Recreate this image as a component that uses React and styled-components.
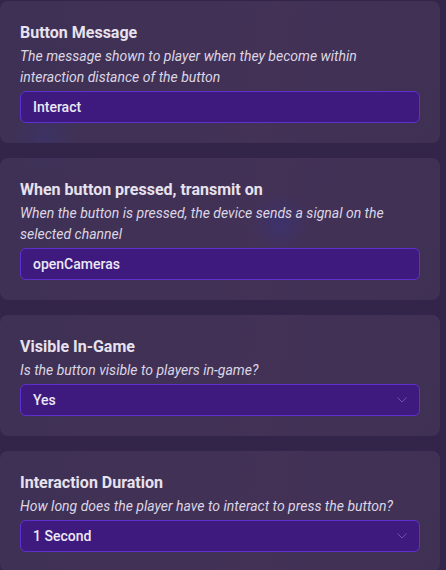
import React from 'react';
import styled, { createGlobalStyle } from 'styled-components';

const GlobalStyle = createGlobalStyle`
  html, body {
    margin: 0;
    padding: 0;
    background: #33244a;
  }

  body {
    font-family: Roboto, "Noto Sans", sans-serif;
    -webkit-font-smoothing: antialiased;
  }
`;

const Page = styled('div')`
  display: flex;
  flex-direction: column;
  gap: 15px;
  width: 440px;
  padding-top: 1px;
  min-height: 570px;
  box-sizing: border-box;
`;

const glows = {
  first: 'radial-gradient(circle at 45px 135px, rgba(58, 52, 112, 0.55) 0, rgba(58, 52, 112, 0) 32px),',
  second:
    'radial-gradient(circle at 45px -20px, rgba(58, 52, 112, 0.45) 0, rgba(58, 52, 112, 0) 34px),' +
    'radial-gradient(circle at 280px 65px, rgba(56, 50, 122, 0.6) 0, rgba(56, 50, 122, 0) 30px),',
};

const Card = styled('section')`
  display: flex;
  flex-direction: column;
  padding: 20px;
  border-radius: 8px;
  background: ${(p) => glows[p.$glow] || ''} linear-gradient(100deg, #3e3155 0%, #433156 60%, #3f3154 100%);
`;

const Title = styled('div')`
  margin-top: 1px;
  font-size: 16px;
  line-height: 22px;
  font-weight: 700;
  color: #e7e2ee;
`;

const Description = styled('div')`
  margin-top: 2px;
  font-size: 14px;
  line-height: 21px;
  font-style: italic;
  color: #dcd6e4;
`;

const Field = styled('div')`
  display: flex;
  align-items: center;
  justify-content: space-between;
  margin-top: 3px;
  height: 32px;
  box-sizing: border-box;
  padding: 0 11px 0 12px;
  border: 1px solid #5e31cf;
  border-radius: 6px;
  background: #3e1a7f;
  color: #ece8f4;
  font-size: 14px;
  font-weight: 500;
`;

const Chevron = styled('svg')`
  width: 12px;
  height: 8px;
  color: #6d4fb4;
`;

function ChevronDown() {
  return (
    <Chevron viewBox="0 0 12 8" fill="none">
      <path d="M1.5 1.5 L6 6 L10.5 1.5" stroke="currentColor" strokeWidth="1" />
    </Chevron>
  );
}

const settings = [
  {
    title: 'Button Message',
    text: 'The message shown to player when they become within interaction distance of the button',
    value: 'Interact',
    glow: 'first',
  },
  {
    title: 'When button pressed, transmit on',
    text: 'When the button is pressed, the device sends a signal on the selected channel',
    value: 'openCameras',
    glow: 'second',
  },
  {
    title: 'Visible In-Game',
    text: 'Is the button visible to players in-game?',
    value: 'Yes',
    select: true,
  },
  {
    title: 'Interaction Duration',
    text: 'How long does the player have to interact to press the button?',
    value: '1 Second',
    select: true,
  },
];

export default function App() {
  return (
    <>
      <GlobalStyle />
      <Page>
        {settings.map((item) => (
          <Card key={item.title} $glow={item.glow}>
            <Title>{item.title}</Title>
            <Description>{item.text}</Description>
            <Field>
              <span>{item.value}</span>
              {item.select && <ChevronDown />}
            </Field>
          </Card>
        ))}
      </Page>
    </>
  );
}
